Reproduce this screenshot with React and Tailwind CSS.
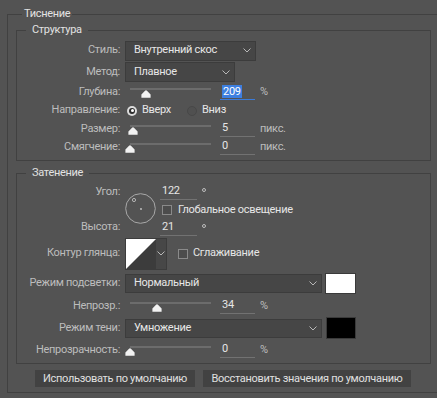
import React from 'react';

const FONT = { fontFamily: 'Roboto, "Noto Sans", sans-serif' };

const Chevron = () => (
  <svg width="8" height="5" viewBox="0 0 8 5" className="shrink-0">
    <path d="M0.5 0.5 L4 4 L7.5 0.5" fill="none" stroke="#b8b8b8" strokeWidth="1" />
  </svg>
);

const Label = ({ children }) => (
  <div className="w-[103px] shrink-0 text-right text-[#bdbdbd] whitespace-nowrap">{children}</div>
);

const Select = ({ value, width, height = 'h-[20px]' }) => (
  <div className={`${width} ${height} ml-[5px] flex items-center justify-between pl-[8px] pr-[4px] bg-[#464646] border border-[#3c3c3c] text-[#e6e6e6]`}>
    <span>{value}</span>
    <Chevron />
  </div>
);

// Ползунок: трек 81px, позиция бегунка из данных
const Slider = ({ pos }) => (
  <div className="relative w-[81px] h-[18px] ml-[10px] shrink-0">
    <div className="absolute left-0 right-0 top-[5px] h-[2px] bg-[#6c6c6c]" />
    <svg
      width="10"
      height="8"
      viewBox="0 0 10 8"
      className="absolute top-[7px]"
      style={{ left: pos - 5 }}
    >
      <path d="M5 0.3 Q5.6 0.3 6.2 1 L9.6 4.6 V7.8 H0.4 V4.6 L3.8 1 Q4.4 0.3 5 0.3 Z" fill="#f2f2f2" />
    </svg>
  </div>
);

const NumInput = ({ value, width = 'w-[35px]', selected, className = '' }) => (
  <div
    className={`${width} h-[16px] flex items-center pl-[2px] border-b ${
      selected ? 'border-[#3b7bd8]' : 'border-[#727272]'
    } ${className}`}
  >
    <span className={selected ? 'bg-[#3d7fe0] text-white leading-[13px] px-[1px]' : 'text-[#e6e6e6]'}>{value}</span>
  </div>
);

const Unit = ({ children, className = 'ml-[5px]' }) => (
  <span className={`${className} text-[#bdbdbd]`}>{children}</span>
);

const Degree = () => (
  <div className="ml-[5px] self-start mt-[5px] w-[4px] h-[4px] rounded-full border border-[#bdbdbd]" />
);

const Checkbox = () => (
  <div className="w-[10px] h-[10px] border border-[#8a8a8a] bg-[#4c4c4c] shrink-0" />
);

const Radio = ({ checked }) =>
  checked ? (
    <div className="w-[10px] h-[10px] rounded-full bg-[#dcdcdc] flex items-center justify-center shrink-0">
      <div className="w-[6px] h-[6px] rounded-full bg-[#2d2d2d] flex items-center justify-center">
        <div className="w-[3px] h-[3px] rounded-full bg-white" />
      </div>
    </div>
  ) : (
    <div className="w-[10px] h-[10px] rounded-full bg-[#505050] border border-[#484848] shrink-0" />
  );

const Group = ({ title, className, children }) => (
  <fieldset className={`border border-[#414141] ${className}`}>
    <legend className="ml-[9px] px-[6px] h-[14px] leading-[14px] text-[#e2e2e2]">{title}</legend>
    {children}
  </fieldset>
);

export default function App() {
  return (
    <div className="w-[437px] h-[398px] overflow-hidden bg-[#535353] pl-[7px] pt-[7px] text-[11px] tracking-[-0.3px]" style={FONT}>
      <fieldset className="w-[432px] border border-[#414141] pb-[5px]">
        <legend className="ml-[14px] px-[2px] h-[14px] leading-[14px] text-[#e2e2e2]">Тиснение</legend>

        {/* Структура */}
        <Group title="Структура" className="ml-[8px] mr-[7px] mt-[2px] pt-[3px] pb-[4px]">
          <div className="flex items-center h-[21px]">
            <Label>Стиль:</Label>
            <Select value="Внутренний скос" width="w-[131px]" />
          </div>
          <div className="flex items-center h-[22px]">
            <Label>Метод:</Label>
            <Select value="Плавное" width="w-[110px]" />
          </div>
          <div className="flex items-center h-[18px]">
            <Label>Глубина:</Label>
            <Slider pos={16} />
            <NumInput value="209" selected className="ml-[9px]" />
            <Unit>%</Unit>
          </div>
          <div className="flex items-center h-[19px]">
            <Label>Направление:</Label>
            <div className="ml-[7px] w-[60px] flex items-center">
              <Radio checked />
              <span className="ml-[5px] text-[#e6e6e6]">Вверх</span>
            </div>
            <div className="flex items-center">
              <Radio />
              <span className="ml-[5px] text-[#e6e6e6]">Вниз</span>
            </div>
          </div>
          <div className="flex items-center h-[18px]">
            <Label>Размер:</Label>
            <Slider pos={3} />
            <NumInput value="5" className="ml-[9px]" />
            <Unit>пикс.</Unit>
          </div>
          <div className="flex items-center h-[18px]">
            <Label>Смягчение:</Label>
            <Slider pos={0} />
            <NumInput value="0" className="ml-[9px]" />
            <Unit>пикс.</Unit>
          </div>
        </Group>

        {/* Затенение */}
        <Group title="Затенение" className="ml-[8px] mr-[7px] mt-[5px] pt-[3px] pb-[3px]">
          <div className="flex h-[53px]">
            <div className="w-[103px] flex flex-col">
              <div className="h-[18px] flex items-center justify-end text-[#bdbdbd]">Угол:</div>
              <div className="h-[18px]" />
              <div className="h-[17px] flex items-center justify-end text-[#bdbdbd]">Высота:</div>
            </div>
            <div className="ml-[5px] pt-[10px]">
              <svg width="31" height="31" viewBox="0 0 31 31">
                <circle cx="15.5" cy="15.5" r="14.8" fill="none" stroke="#a8a8a8" strokeWidth="1" />
                <circle cx="16" cy="16" r="0.9" fill="#c8c8c8" />
                <circle cx="9" cy="7" r="1.6" fill="none" stroke="#bdbdbd" strokeWidth="0.9" />
              </svg>
            </div>
            <div className="ml-[4px] flex flex-col">
              <div className="h-[18px] flex items-center">
                <NumInput value="122" width="w-[37px]" />
                <Degree />
              </div>
              <div className="h-[18px] flex items-center">
                <div className="ml-[2px]"><Checkbox /></div>
                <span className="ml-[6px] text-[#e6e6e6]">Глобальное освещение</span>
              </div>
              <div className="h-[17px] flex items-center">
                <NumInput value="21" width="w-[37px]" />
                <Degree />
              </div>
            </div>
          </div>

          <div className="flex items-center h-[35px]">
            <Label>Контур глянца:</Label>
            <div className="ml-[5px] flex h-[32px] border border-[#3c3c3c]">
              <svg width="30" height="30" viewBox="0 0 30 30">
                <rect width="30" height="30" fill="#3c3c3c" />
                <path d="M0 0 H30 L0 30 Z" fill="#ffffff" />
              </svg>
              <div className="w-[10px] h-full bg-[#474747] flex items-center justify-center">
                <Chevron />
              </div>
            </div>
            <div className="ml-[11px]"><Checkbox /></div>
            <span className="ml-[5px] text-[#e6e6e6]">Сглаживание</span>
          </div>

          <div className="flex items-center h-[25px]">
            <Label>Режим подсветки:</Label>
            <Select value="Нормальный" width="w-[197px]" height="h-[19px]" />
            <div className="ml-[3px] w-[31px] h-[21px] bg-white border border-[#3a3a3a]" />
          </div>
          <div className="flex items-center h-[20px]">
            <Label>Непрозр.:</Label>
            <Slider pos={27} />
            <NumInput value="34" className="ml-[9px]" />
            <Unit>%</Unit>
          </div>
          <div className="flex items-center h-[24px]">
            <Label>Режим тени:</Label>
            <Select value="Умножение" width="w-[197px]" height="h-[19px]" />
            <div className="ml-[4px] w-[30px] h-[22px] bg-black border border-[#3a3a3a]" />
          </div>
          <div className="flex items-center h-[20px]">
            <Label>Непрозрачность:</Label>
            <Slider pos={0} />
            <NumInput value="0" className="ml-[9px]" />
            <Unit>%</Unit>
          </div>
        </Group>

        {/* Кнопки */}
        <div className="flex mt-[6px] ml-[27px] gap-[8px]">
          <button className="w-[160px] h-[17px] bg-[#424242] text-[#e0e0e0] leading-none">
            Использовать по умолчанию
          </button>
          <button className="w-[208px] h-[17px] bg-[#424242] text-[#e0e0e0] leading-none">
            Восстановить значения по умолчанию
          </button>
        </div>
      </fieldset>
    </div>
  );
}
